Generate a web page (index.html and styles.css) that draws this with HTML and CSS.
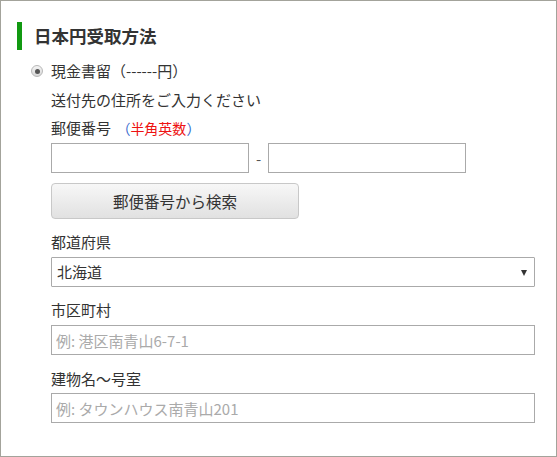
FILE: index.html
```html
<!DOCTYPE html>
<html lang="ja">
<head>
<meta charset="utf-8">
<link rel="stylesheet" href="styles.css">
</head>
<body>
<div class="panel">
  <h2 class="heading">日本円受取方法</h2>
  <div class="body">
    <div class="option">
      <span class="radio"><span class="dot"></span></span>
      <span>現金書留（------円）</span>
    </div>
    <div class="line">送付先の住所をご入力ください</div>
    <div class="label">郵便番号 <span class="note"><span class="paren">（</span>半角英数<span class="paren">）</span></span></div>
    <div class="zip">
      <input class="input zip-input" type="text">
      <span class="dash">-</span>
      <input class="input zip-input" type="text">
    </div>
    <button class="search" type="button">郵便番号から検索</button>
    <div class="label label-gap">都道府県</div>
    <div class="select">
      <span>北海道</span>
      <span class="arrow"></span>
    </div>
    <div class="label label-gap">市区町村</div>
    <input class="input wide" type="text" placeholder="例: 港区南青山6-7-1">
    <div class="label label-gap label-tight">建物名〜号室</div>
    <input class="input wide" type="text" placeholder="例: タウンハウス南青山201">
  </div>
</div>
</body>
</html>
```
FILE: styles.css
```css
html, body {
  margin: 0;
  padding: 0;
  background: #ffffff;
}
body {
  font-family: "Noto Sans CJK JP", "Noto Sans", sans-serif;
  color: #333333;
  font-size: 15px;
}
.panel {
  box-sizing: border-box;
  width: 557px;
  height: 457px;
  border: 1px solid #a3a39b;
  padding: 21px 21px 0 16px;
}
.heading {
  margin: 0;
  border-left: 5px solid #119911;
  padding-left: 12px;
  height: 28px;
  line-height: 28px;
  font-size: 17.5px;
  font-weight: bold;
  color: #333333;
}
.body {
  padding-left: 34px;
  margin-top: 7px;
}
.option {
  display: flex;
  align-items: center;
  height: 28px;
  line-height: 28px;
  margin-left: -20px;
}
.radio {
  box-sizing: border-box;
  width: 12px;
  height: 12px;
  border-radius: 50%;
  border: 1px solid #b8b8b8;
  background: linear-gradient(#f4f4f4, #d8d8d8);
  display: flex;
  align-items: center;
  justify-content: center;
  margin-right: 8px;
}
.dot {
  width: 5px;
  height: 5px;
  border-radius: 50%;
  background: #555555;
}
.line {
  height: 28px;
  line-height: 28px;
  margin-top: 1px;
}
.label {
  height: 28px;
  line-height: 28px;
}
.note {
  color: #ee1111;
  font-size: 14px;
  margin-left: 2px;
}
.paren {
  color: #3366cc;
}
.zip {
  display: flex;
  align-items: center;
  margin-top: 1px;
}
.input {
  box-sizing: border-box;
  height: 30px;
  border: 1px solid #aaaaaa;
  border-radius: 0;
  padding: 0 4px;
  font-family: "Noto Sans CJK JP", "Noto Sans", sans-serif;
  font-size: 15px;
  color: #333333;
  outline: none;
  display: block;
  margin: 0;
}
.input::placeholder {
  color: #aaaaaa;
}
.zip-input {
  width: 198px;
}
.dash {
  width: 19px;
  text-align: center;
  color: #555555;
}
.search {
  display: block;
  box-sizing: border-box;
  margin-top: 10px;
  width: 248px;
  height: 36px;
  border: 1px solid #c8c8c8;
  border-radius: 4px;
  background: linear-gradient(#f7f7f7, #e1e1e1);
  font-family: "Noto Sans CJK JP", "Noto Sans", sans-serif;
  font-size: 15.5px;
  color: #333333;
  padding: 0;
}
.label-gap {
  height: 30px;
  line-height: 30px;
  margin-top: 8px;
}
.label-tight {
  height: 29px;
  line-height: 29px;
  margin-top: 9px;
}
.select {
  position: relative;
  box-sizing: border-box;
  height: 30px;
  border: 1px solid #aaaaaa;
  border-radius: 1px;
  padding-left: 5px;
  line-height: 28px;
  display: flex;
  align-items: center;
}
.arrow {
  position: absolute;
  right: 7px;
  top: 12px;
  width: 0;
  height: 0;
  border-left: 3px solid transparent;
  border-right: 3px solid transparent;
  border-top: 6px solid #333333;
}
.wide {
  width: 100%;
}
```
